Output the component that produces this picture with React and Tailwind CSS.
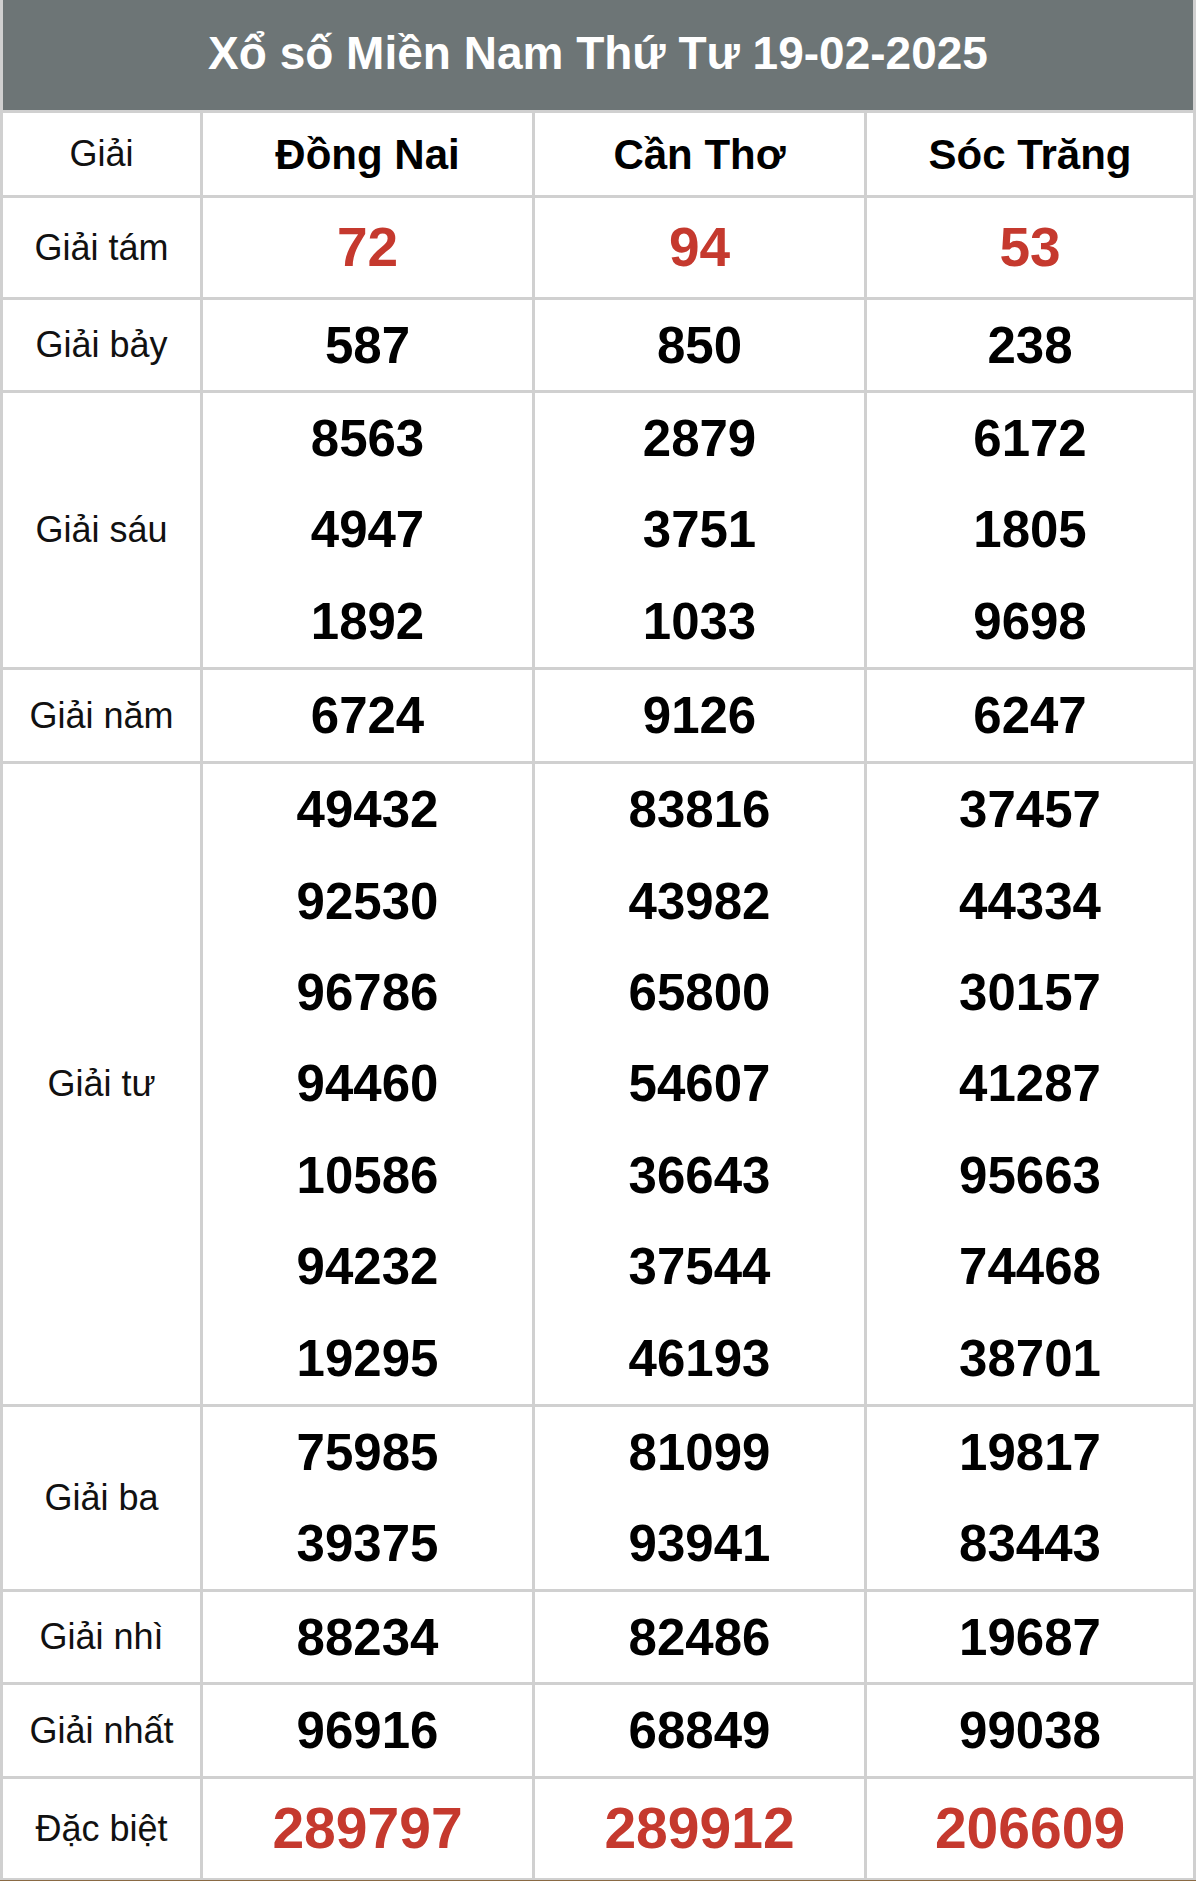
import React from "react";

const provinces = ["Đồng Nai", "Cần Thơ", "Sóc Trăng"];

const rows = [
  { label: "Giải tám", kind: "tam", data: [["72"], ["94"], ["53"]] },
  { label: "Giải bảy", data: [["587"], ["850"], ["238"]] },
  {
    label: "Giải sáu",
    data: [
      ["8563", "4947", "1892"],
      ["2879", "3751", "1033"],
      ["6172", "1805", "9698"],
    ],
  },
  { label: "Giải năm", data: [["6724"], ["9126"], ["6247"]] },
  {
    label: "Giải tư",
    data: [
      ["49432", "92530", "96786", "94460", "10586", "94232", "19295"],
      ["83816", "43982", "65800", "54607", "36643", "37544", "46193"],
      ["37457", "44334", "30157", "41287", "95663", "74468", "38701"],
    ],
  },
  {
    label: "Giải ba",
    data: [
      ["75985", "39375"],
      ["81099", "93941"],
      ["19817", "83443"],
    ],
  },
  { label: "Giải nhì", data: [["88234"], ["82486"], ["19687"]] },
  { label: "Giải nhất", data: [["96916"], ["68849"], ["99038"]] },
  { label: "Đặc biệt", kind: "db", data: [["289797"], ["289912"], ["206609"]] },
];

function numClass(kind) {
  if (kind === "tam") return "text-[55px] font-bold text-[#c5392e]";
  if (kind === "db") return "text-[57px] font-bold text-[#c5392e]";
  return "text-[51px] font-bold text-black";
}

export default function App() {
  return (
    <div
      className="w-[1200px] bg-white pr-[4px]"
      style={{ fontFamily: '"Liberation Sans", Arial, sans-serif' }}
    >
      <div className="grid grid-cols-[197px_329px_329px_326px] grid-rows-[110px_82px_99px_90px_274px_91px_640px_182px_90px_91px_99px] gap-[3px] bg-[#d0d0d0] px-[3px] pb-[2px]">
        <div className="col-span-4 flex items-center justify-center bg-[#6d7576] pb-[4px] text-[46px] font-bold text-white">
          Xổ số Miền Nam Thứ Tư 19-02-2025
        </div>
        <div className="flex items-center justify-center bg-white text-[36px] text-[#111]">
          Giải
        </div>
        {provinces.map((p) => (
          <div
            key={p}
            className="flex items-center justify-center bg-white text-[42px] font-bold text-black"
          >
            {p}
          </div>
        ))}
        {rows.map((r) => (
          <React.Fragment key={r.label}>
            <div className="flex items-center justify-center bg-white text-[36px] text-[#111]">
              {r.label}
            </div>
            {r.data.map((col, ci) => (
              <div key={ci} className="flex flex-col bg-white">
                {col.map((n, ni) => (
                  <div
                    key={ni}
                    className={`flex flex-1 items-center justify-center leading-none ${numClass(r.kind)}`}
                  >
                    {n}
                  </div>
                ))}
              </div>
            ))}
          </React.Fragment>
        ))}
      </div>
      <div className="h-[1px] bg-[#8a6a44]" />
    </div>
  );
}
